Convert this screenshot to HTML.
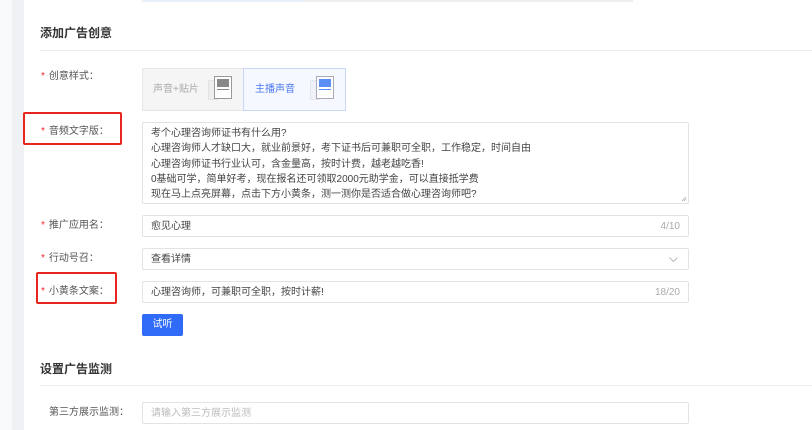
<!DOCTYPE html>
<html><head><meta charset="utf-8"><style>
*{margin:0;padding:0;box-sizing:border-box}
body{width:812px;height:430px;overflow:hidden;background:#fff;font-family:"Liberation Sans","Noto Sans CJK SC",sans-serif;font-size:10px;color:#333;position:relative}
.a{position:absolute}
.t{font-size:12px;font-weight:bold;color:#333}
.lab{position:absolute;color:#555;font-size:10px;line-height:12px}
.lab b{color:#f5222d;font-weight:normal;margin-right:4px}
.inp{position:absolute;left:142px;width:547px;height:22px;border:1px solid #e3e3e3;border-radius:2px;padding-left:8px;padding-top:5px;line-height:12px;color:#444}
.cnt{position:absolute;right:8px;top:5px;color:#aaa}
.red{position:absolute;border:2px solid #e8261f;border-radius:2px}
</style></head><body>
<div class="a" style="left:0;top:0;width:12px;height:430px;background:#f8f9fb"></div>
<div class="a" style="left:12px;top:0;width:12px;height:430px;background:#eff1f4"></div>
<div class="a" style="left:142px;top:0;width:163px;height:2px;background:#e8effa"></div>
<div class="a" style="left:305px;top:0;width:328px;height:2px;background:#eee"></div>
<div class="a t" style="left:40px;top:24px">添加广告创意</div>
<div class="a" style="left:40px;top:50px;width:772px;height:1px;background:#ebebeb"></div>

<div class="lab" style="left:41px;top:71px"><b>*</b>创意样式：</div>
<div class="a" style="left:142px;top:68px;width:102px;height:43px;background:#f5f5f5;border:1px solid #e6e6e6"></div>
<div class="a" style="left:153px;top:84px;color:#aaa;line-height:12px">声音+贴片</div>
<div class="a" style="left:208px;top:80px;width:10px;height:20px;background:#eee;border:1px solid #e2e2e2"></div>
<div class="a" style="left:214px;top:76px;width:18px;height:23px;background:#fff;border:1px solid #999"><div style="margin:2px;height:8px;background:#888"></div><div style="margin:1px 2px;height:1px;background:#888"></div></div>
<div class="a" style="left:243px;top:68px;width:103px;height:43px;background:#f6f8ff;border:1px solid #c9d6f8"></div>
<div class="a" style="left:255px;top:84px;color:#4a78f0;line-height:12px">主播声音</div>
<div class="a" style="left:310px;top:80px;width:10px;height:20px;background:#eef1f8;border:1px solid #e2e6ee"></div>
<div class="a" style="left:316px;top:76px;width:18px;height:23px;background:#fff;border:1px solid #aab"><div style="margin:2px;height:8px;background:#5b8ef5"></div><div style="margin:1px 2px;height:1px;background:#5b8ef5"></div></div>

<div class="lab" style="left:41px;top:126px"><b>*</b>音频文字版：</div>
<div class="a" style="left:142px;top:122px;width:547px;height:82px;border:1px solid #e3e3e3;border-radius:2px;padding:3px 8px;line-height:15.3px;color:#444">考个心理咨询师证书有什么用?<br>心理咨询师人才缺口大，就业前景好，考下证书后可兼职可全职，工作稳定，时间自由<br>心理咨询师证书行业认可，含金量高，按时计费，越老越吃香!<br>0基础可学，简单好考，现在报名还可领取2000元助学金，可以直接抵学费<br>现在马上点亮屏幕，点击下方小黄条，测一测你是否适合做心理咨询师吧?</div>
<svg class="a" style="left:681px;top:196px" width="6" height="6"><path d="M1 5L5 1M3 5L5 3" stroke="#aaa" stroke-width="0.8"/></svg>
<div class="red" style="left:23px;top:112px;width:99px;height:33px"></div>

<div class="lab" style="left:41px;top:220px"><b>*</b>推广应用名：</div>
<div class="inp" style="top:215px">愈见心理<span class="cnt">4/10</span></div>
<div class="lab" style="left:41px;top:253px"><b>*</b>行动号召：</div>
<div class="inp" style="top:248px">查看详情<svg class="a" style="right:10px;top:8px" width="9" height="6"><path d="M0.5 0.5L4.5 4.5L8.5 0.5" fill="none" stroke="#bbb"/></svg></div>
<div class="lab" style="left:41px;top:286px"><b>*</b>小黄条文案：</div>
<div class="inp" style="top:281px">心理咨询师，可兼职可全职，按时计薪!<span class="cnt">18/20</span></div>
<div class="red" style="left:36px;top:272px;width:81px;height:32px"></div>
<div class="a" style="left:142px;top:314px;width:41px;height:22px;background:#2f6bf6;border-radius:2px;color:#fff;text-align:center;line-height:22px">试听</div>

<div class="a t" style="left:40px;top:360px">设置广告监测</div>
<div class="a" style="left:40px;top:385px;width:772px;height:1px;background:#ebebeb"></div>
<div class="lab" style="left:49px;top:407px">第三方展示监测：</div>
<div class="inp" style="top:402px;color:#bbb">请输入第三方展示监测</div>
</body></html>
